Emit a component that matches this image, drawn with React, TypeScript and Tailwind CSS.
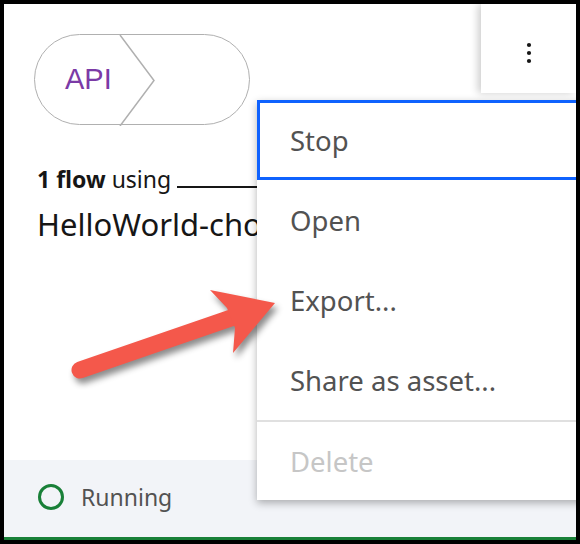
import React from 'react';

const plex = { fontFamily: '"Noto Sans", "Open Sans", sans-serif' };

const menuItems = ['Stop', 'Open', 'Export...', 'Share as asset...'];

const App = () => {
  return (
    <div className="relative w-[580px] h-[544px] bg-black p-1">
      <div
        className="relative h-full bg-white overflow-hidden flex flex-col border-b-[3px] border-[#198038]"
        style={plex}
      >
        {/* card body */}
        <div className="flex-1 pl-[30px] pt-[30px]">
          <div className="relative w-[216px] h-[91px] rounded-full border-[1.5px] border-[#b0b0b0] flex items-center pl-[30px]">
            <span
              className="text-[29px] leading-none text-[#7b3aa6]"
              style={{ fontFamily: '"Liberation Sans", Arial, sans-serif' }}
            >
              API
            </span>
            <svg className="absolute left-0 top-0" width="216" height="91" viewBox="0 0 216 91">
              <polyline points="85,0 119,45.5 85,91" fill="none" stroke="#b0b0b0" strokeWidth="1.5" />
            </svg>
          </div>
          <div className="mt-[40px] ml-[3px] whitespace-nowrap text-[23px] leading-[28px] text-[#161616]">
            <span className="font-bold">1 flow</span> using{' '}
            <span className="inline-block w-[120px] border-b-2 border-[#161616] align-baseline" />
          </div>
          <div className="mt-[13px] ml-[3px] text-[31px] leading-[36px] text-[#161616] whitespace-nowrap">
            HelloWorld-chocolate
          </div>
        </div>

        {/* footer */}
        <div className="h-[77px] bg-[#f2f4f8] flex items-center pl-[34px] gap-[17px] pb-[3px]">
          <span className="w-[26px] h-[26px] rounded-full border-[3.5px] border-[#198038]" />
          <span className="text-[23px] text-[#525252]">Running</span>
        </div>

        {/* overflow trigger */}
        <div className="absolute right-0 top-0 w-[95px] h-[89px] bg-white shadow-[-3px_0_8px_rgba(0,0,0,0.2)] flex justify-center pt-[38px]">
          <svg width="6" height="22" viewBox="0 0 6 22">
            <circle cx="3" cy="3" r="2.1" fill="#161616" />
            <circle cx="3" cy="11" r="2.1" fill="#161616" />
            <circle cx="3" cy="19" r="2.1" fill="#161616" />
          </svg>
        </div>

        {/* menu */}
        <div className="absolute left-[253px] top-[96px] w-[330px] bg-white shadow-[0_3px_8px_rgba(0,0,0,0.3)]">
          {menuItems.map((item, i) => (
            <div
              key={item}
              className={
                i === 0
                  ? 'h-[80px] flex items-center pl-[30px] pt-[2px] border-[3px] border-[#0f62fe] text-[27.5px] text-[#525252]'
                  : 'h-[80px] flex items-center pl-[33px] pt-[2px] text-[27.5px] text-[#525252]'
              }
            >
              {item}
            </div>
          ))}
          <div className="h-[2px] bg-[#e0e0e0]" />
          <div className="h-[78px] flex items-center pl-[33px] pt-[2px] text-[27.5px] text-[#c6c6c6]">Delete</div>
        </div>
      </div>

      {/* annotation arrow */}
      <svg
        className="absolute left-0 top-0 pointer-events-none drop-shadow-[3px_5px_3px_rgba(0,0,0,0.45)]"
        width="580"
        height="544"
        viewBox="0 0 580 544"
      >
        <line x1="80" y1="370" x2="231" y2="318" stroke="#f4584b" strokeWidth="17" strokeLinecap="round" />
        <polygon points="227,308 210,290 275,303 233,353 235,328" fill="#f4584b" />
      </svg>
    </div>
  );
};

export default App;
